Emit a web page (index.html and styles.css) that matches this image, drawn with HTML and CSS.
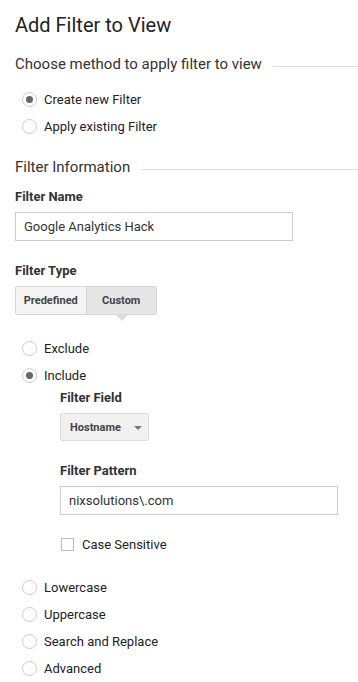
FILE: index.html
```html
<!DOCTYPE html>
<html lang="en">
<head>
<meta charset="UTF-8">
<title>Add Filter to View</title>
<link rel="stylesheet" href="styles.css">
</head>
<body>
    <h1>Add Filter to View</h1>

    <!-- Method -->
    <div class="legend legend-method"><span>Choose method to apply filter to view</span></div>
    <div class="radio-list radio-method">
        <label class="radio checked"><span class="dot"></span>Create new Filter</label>
        <label class="radio"><span class="dot"></span>Apply existing Filter</label>
    </div>

    <!-- Filter info -->
    <div class="legend legend-info"><span>Filter Information</span></div>

    <div class="field-label label-name">Filter Name</div>
    <div class="text-input name-input">Google Analytics Hack</div>

    <div class="field-label label-type">Filter Type</div>
    <div class="segmented">
        <div class="seg">Predefined</div>
        <div class="seg active">Custom</div>
    </div>

    <div class="radio-list radio-type">
        <label class="radio"><span class="dot"></span>Exclude</label>
        <label class="radio checked"><span class="dot"></span>Include</label>
    </div>

    <div class="sub-options">
        <div class="field-label">Filter Field</div>
        <div class="dropdown">Hostname <span class="caret"></span></div>

        <div class="field-label label-pattern">Filter Pattern</div>
        <div class="text-input pattern-input">nixsolutions\.com</div>

        <label class="checkbox"><span class="box"></span>Case Sensitive</label>
    </div>

    <div class="radio-list radio-more">
        <label class="radio"><span class="dot"></span>Lowercase</label>
        <label class="radio"><span class="dot"></span>Uppercase</label>
        <label class="radio"><span class="dot"></span>Search and Replace</label>
        <label class="radio"><span class="dot"></span>Advanced</label>
    </div>
</body>
</html>
```

FILE: styles.css
```css
body {
    font-family: Roboto, "Liberation Sans", Arial, sans-serif;
    color: #222;
    background-color: #fff;
    margin: 0;
    padding: 0 0 0 15px;
    width: 343px;
}
h1 {
    margin: 0;
    padding-top: 12px;
    font-size: 20px;
    font-weight: 400;
    line-height: 26px;
    color: #222;
}

/* Section legends with trailing rule */
.legend {
    display: flex;
    align-items: center;
    font-size: 15px;
    line-height: 20px;
    color: #333;
}
.legend::after {
    content: "";
    flex: 1;
    height: 1px;
    background-color: #ddd;
    margin-left: 11px;
    margin-top: 5px;
}
.legend-method { margin-top: 16px; }
.legend-info { margin-top: 17px; }

/* Radios */
.radio-list { display: flex; flex-direction: column; }
.radio-method { margin-top: 12px; }
.radio-type { margin-top: 20px; }
.radio-more { margin-top: 20px; }
.radio {
    display: flex;
    align-items: center;
    height: 27px;
    font-size: 13px;
    color: #222;
    padding-left: 7px;
}
.radio .dot {
    width: 13px;
    height: 13px;
    border: 1px solid #ccc;
    border-radius: 50%;
    margin-right: 7px;
    display: flex;
    align-items: center;
    justify-content: center;
    background-color: #fff;
}
.radio.checked .dot::after {
    content: "";
    width: 7px;
    height: 7px;
    border-radius: 50%;
    background-color: #666;
}

/* Labels and inputs */
.field-label {
    font-size: 13px;
    font-weight: 700;
    line-height: 16px;
    color: #333;
}
.label-name { margin-top: 12px; }
.label-type { margin-top: 22px; }
.label-pattern { margin-top: 22px; }

.text-input {
    box-sizing: border-box;
    height: 29px;
    margin-top: 7px;
    border: 1px solid #ccc;
    padding: 0 8px;
    font-size: 13px;
    line-height: 27px;
    color: #333;
}
.name-input { width: 278px; }
.pattern-input { width: 278px; }

/* Filter type toggle */
.segmented {
    display: flex;
    width: 142px;
    height: 29px;
    margin-top: 7px;
    box-sizing: border-box;
    border: 1px solid #d6d6d6;
    border-radius: 2px;
}
.seg {
    position: relative;
    display: flex;
    align-items: center;
    justify-content: center;
    font-size: 11px;
    font-weight: 700;
    color: #444;
    background-color: #f4f4f4;
    width: 71px;
}
.seg.active {
    background-color: #e6e6e6;
    border-left: 1px solid #d6d6d6;
}
.seg.active::after {
    content: "";
    position: absolute;
    bottom: -7px;
    left: 29px;
    border-left: 6px solid transparent;
    border-right: 6px solid transparent;
    border-top: 6px solid #dcdcdc;
}

/* Include sub options */
.sub-options {
    padding-left: 45px;
    margin-top: 1px;
}
.dropdown {
    display: flex;
    align-items: center;
    box-sizing: border-box;
    width: 89px;
    height: 28px;
    margin-top: 7px;
    padding-left: 9px;
    background-color: #f1f1f1;
    border: 1px solid #ddd;
    border-radius: 2px;
    font-size: 11px;
    font-weight: 700;
    color: #444;
}
.caret {
    margin-left: 13px;
    margin-top: 2px;
    border-left: 4px solid transparent;
    border-right: 4px solid transparent;
    border-top: 4px solid #777;
}
.checkbox {
    display: flex;
    align-items: center;
    height: 20px;
    margin-top: 19px;
    font-size: 13px;
    color: #222;
}
.checkbox .box {
    box-sizing: border-box;
    width: 13px;
    height: 13px;
    border: 1px solid #bbb;
    margin: 0 8px 0 1px;
}
```
